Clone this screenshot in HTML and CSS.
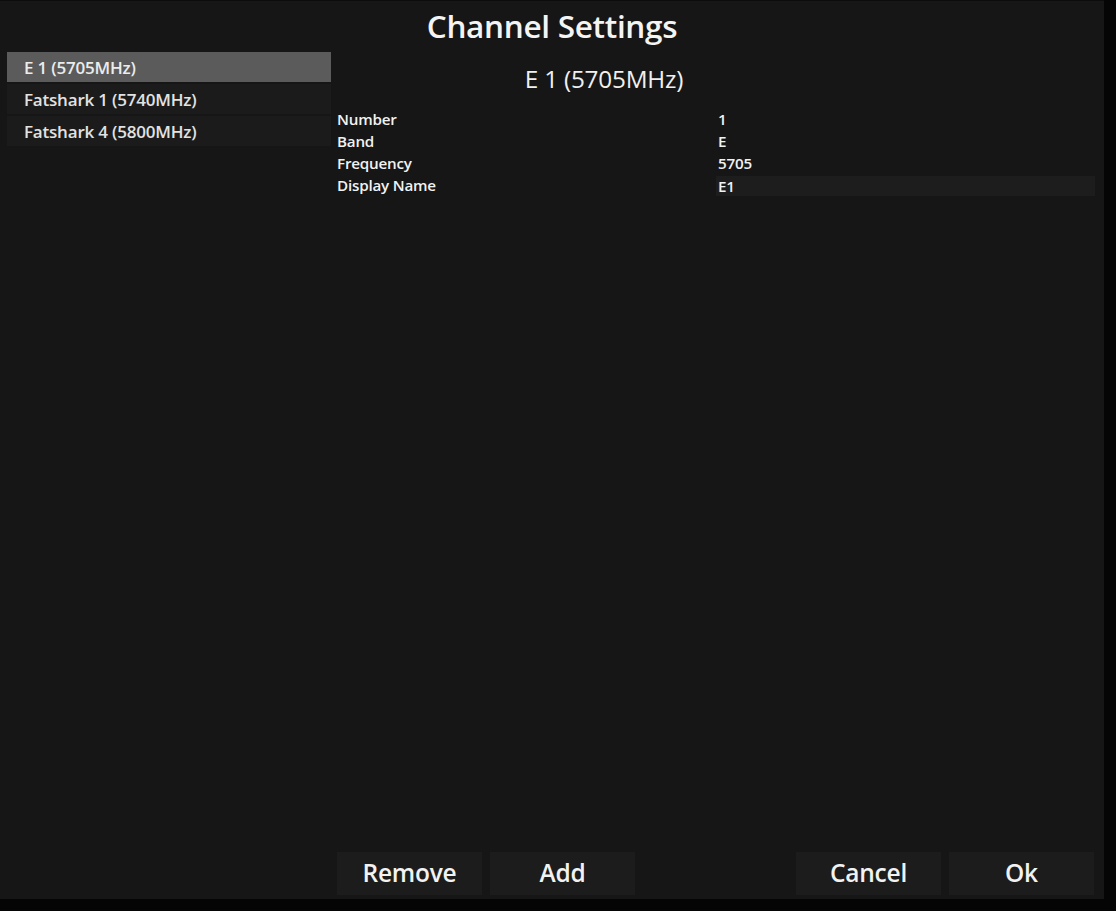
FILE: index.html
```html
<!DOCTYPE html>
<html>
<head>
<meta charset="utf-8">
<title>Channel Settings</title>
<link rel="stylesheet" href="styles.css">
</head>
<body>
<div class="dialog">
  <div class="title">Channel Settings</div>
  <div class="main">
    <ul class="list">
      <li class="item selected">E 1 (5705MHz)</li>
      <li class="item">Fatshark 1 (5740MHz)</li>
      <li class="item">Fatshark 4 (5800MHz)</li>
    </ul>
    <div class="panel">
      <div class="heading">E 1 (5705MHz)</div>
      <div class="props">
        <div class="label">Number</div><div class="value">1</div>
        <div class="label">Band</div><div class="value">E</div>
        <div class="label">Frequency</div><div class="value">5705</div>
        <div class="label">Display Name</div><div class="value input">E1</div>
      </div>
    </div>
  </div>
  <div class="buttons">
    <div class="btn">Remove</div>
    <div class="btn">Add</div>
    <div class="spacer"></div>
    <div class="btn">Cancel</div>
    <div class="btn">Ok</div>
  </div>
</div>
</body>
</html>
```
FILE: styles.css
```css
html, body {
  margin: 0;
  padding: 0;
  background: #050505;
  width: 1116px;
  height: 911px;
  overflow: hidden;
}
body {
  font-family: "Open Sans", "Noto Sans", sans-serif;
  color: #f0f0f0;
}
.dialog {
  width: 1104px;
  height: 899px;
  background: #161616;
  display: flex;
  flex-direction: column;
  box-sizing: border-box;
  border-top: 1px solid #0c0c0c;
}
.title {
  height: 51px;
  display: flex;
  align-items: center;
  justify-content: center;
  font-size: 31.5px;
  font-weight: 600;
  color: #f4f4f4;
  letter-spacing: -0.3px;
  padding-bottom: 2px;
  box-sizing: border-box;
}
.main {
  flex: 1;
  display: flex;
  gap: 6px;
  padding-left: 7px;
  padding-right: 9px;
  min-height: 0;
}
.list {
  list-style: none;
  margin: 0;
  padding: 0;
  width: 324px;
  display: flex;
  flex-direction: column;
  gap: 2px;
}
.item {
  height: 30px;
  background: #1b1b1b;
  color: #e2e2e2;
  font-size: 17px;
  font-weight: 600;
  padding-left: 17px;
  display: flex;
  align-items: center;
  letter-spacing: -0.2px;
}
.item.selected {
  background: #5b5b5b;
  color: #ececec;
}
.panel {
  flex: 1;
  display: flex;
  flex-direction: column;
}
.heading {
  width: 534px;
  height: 56px;
  display: flex;
  align-items: center;
  justify-content: center;
  font-size: 24.3px;
  font-weight: 500;
  color: #f0f0f0;
  letter-spacing: -0.2px;
  padding-bottom: 3px;
  box-sizing: border-box;
}
.props {
  display: grid;
  grid-template-columns: 379px 1fr;
  grid-auto-rows: 22px;
  font-size: 15.2px;
  font-weight: 600;
  color: #f2f2f2;
}
.label, .value {
  display: flex;
  align-items: center;
  letter-spacing: -0.2px;
}
.value {
  padding-left: 2px;
}
.value.input {
  background: #1d1d1d;
  height: 20px;
  align-self: center;
  margin-top: 2px;
}
.buttons {
  display: flex;
  gap: 8px;
  padding-left: 337px;
  padding-right: 10px;
  padding-bottom: 4px;
  height: 43px;
}
.spacer {
  flex: 1;
}
.btn {
  width: 145px;
  height: 43px;
  background: #1c1c1c;
  display: flex;
  align-items: center;
  justify-content: center;
  font-size: 24.5px;
  font-weight: 600;
  color: #f2f2f2;
  letter-spacing: -0.2px;
  padding-bottom: 2px;
  box-sizing: border-box;
}
```
